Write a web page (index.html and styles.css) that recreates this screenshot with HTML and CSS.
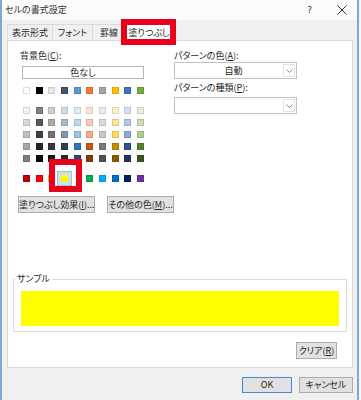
FILE: index.html
```html
<!DOCTYPE HTML>
<html>
    <head>
        <meta charset="utf-8">
        <title>セルの書式設定</title>
        <link rel="stylesheet" href="styles.css">
    </head>
    <body>
        <div class="window">
            <div class="titlebar">
                <span class="title">セルの書式設定</span>
                <span class="help">?</span>
                <svg class="close" width="10" height="10" viewBox="0 0 10 10"><path d="M0.5 0.5L9.5 9.5M9.5 0.5L0.5 9.5" stroke="#333" stroke-width="1"/></svg>
            </div>
            <div class="tabs">
                <div class="tab t1">表示形式</div>
                <div class="tab t2">フォント</div>
                <div class="tab t3">罫線</div>
                <div class="tab active">塗りつぶし<span class="mark mark-tab"></span></div>
            </div>
            <div class="panel">
                <div class="cols">
                    <div class="left">
                        <div class="label">背景色(<u>C</u>):</div>
                        <div class="btn none">色なし</div>
                        <div class="swatches" id="theme"></div>
                        <div class="swatches shades" id="shades"></div>
                        <div class="swatches" id="standard"></div>
                        <div class="actions">
                            <div class="btn effect">塗りつぶし効果(<u>I</u>)...</div>
                            <div class="btn more">その他の色(<u>M</u>)...</div>
                        </div>
                    </div>
                    <div class="right">
                        <div class="label">パターンの色(<u>A</u>):</div>
                        <div class="dropdown"><span class="value">自動</span><span class="arrow"><svg width="7" height="4" viewBox="0 0 7 4"><path d="M0.5 0.5L3.5 3.5L6.5 0.5" fill="none" stroke="#8a8a8a"/></svg></span></div>
                        <div class="label label2">パターンの種類(<u>P</u>):</div>
                        <div class="dropdown dd2"><span class="value"></span><span class="arrow"><svg width="7" height="4" viewBox="0 0 7 4"><path d="M0.5 0.5L3.5 3.5L6.5 0.5" fill="none" stroke="#8a8a8a"/></svg></span></div>
                    </div>
                </div>
                <fieldset class="sample">
                    <legend>サンプル</legend>
                    <div class="sample-fill"></div>
                </fieldset>
                <div class="clear-row"><div class="btn clear">クリア(<u>R</u>)</div></div>
            </div>
            <div class="footer">
                <div class="btn ok">OK</div>
                <div class="btn cancel">キャンセル</div>
            </div>
        </div>
        <script>
        const theme = ["#FFFFFF","#000000","#E7E6E6","#44546A","#5B9BD5","#ED7D31","#A5A5A5","#FFC000","#4472C4","#70AD47"];
        const shades = [
            ["#F2F2F2","#7F7F7F","#D0CECE","#D6DCE4","#DDEBF7","#FCE4D6","#EDEDED","#FFF2CC","#D9E1F2","#E2EFDA"],
            ["#D9D9D9","#595959","#AEAAAA","#ACB9CA","#BDD7EE","#F8CBAD","#DBDBDB","#FFE699","#B4C6E7","#C6E0B4"],
            ["#BFBFBF","#404040","#757171","#8497B0","#9BC2E6","#F4B084","#C9C9C9","#FFD966","#8EA9DB","#A9D08E"],
            ["#A6A6A6","#262626","#3A3838","#333F4F","#2F75B5","#C65911","#7B7B7B","#BF8F00","#305496","#548235"],
            ["#808080","#0D0D0D","#161616","#222B35","#1F4E78","#833C0C","#525252","#806000","#203764","#375623"]
        ];
        const standard = ["#C00000","#FF0000","#FFC000","#FFFF00","#92D050","#00B050","#00B0F0","#0070C0","#002060","#7030A0"];

        function addSwatch(box, color){
            const s = document.createElement("span");
            s.className = "swatch";
            s.style.background = color;
            box.appendChild(s);
            return s;
        }
        theme.forEach((c) => addSwatch(document.getElementById("theme"), c));
        shades.forEach((row) => {
            row.forEach((c) => addSwatch(document.getElementById("shades"), c));
        });
        standard.forEach((c, i) => {
            const s = addSwatch(document.getElementById("standard"), c);
            if(i === 3){
                // picked colour: red note box, then the swatch drawn again on top
                s.classList.add("selected");
                s.style.background = "none";
                const mark = document.createElement("span");
                mark.className = "mark mark-swatch";
                s.appendChild(mark);
                const fill = document.createElement("span");
                fill.className = "fill";
                fill.style.background = c;
                s.appendChild(fill);
            }
        });
        </script>
    </body>
</html>
```
FILE: styles.css
```css
*{
    box-sizing: border-box;
}
body{
    margin: 0;
    background: #f7f7f7;
    font-family: "Noto Sans CJK JP", "Noto Sans", sans-serif;
    font-size: 9px;
    color: #1e1e1e;
    font-feature-settings: "palt";
}
u{
    text-decoration: underline;
    text-underline-offset: 1px;
}
.window{
    width: 359px;
    height: 400px;
    background: #f0f0f0;
    border-left: 2px solid #7fa9d4;
    border-right: 2px solid #7fa9d4;
}
.titlebar{
    height: 20px;
    background: #fbfbfb;
    display: flex;
    align-items: center;
    padding: 0 10px 1px 3px;
}
.title{
    color: #333;
}
.help{
    margin-left: auto;
    margin-right: 25px;
    font-family: "DejaVu Sans", sans-serif;
    font-size: 9px;
    color: #333;
}
.tabs{
    height: 20px;
    display: flex;
    align-items: flex-end;
    padding-left: 5px;
    position: relative;
    z-index: 2;
}
.tab{
    height: 16px;
    line-height: 15px;
    text-align: center;
    border: 1px solid #dadada;
    border-bottom: none;
    background: #f0f0f0;
    margin-right: -1px;
}
.t1{ width: 46px; }
.t2{ width: 41px; }
.t3{ width: 34px; }
.tab.active{
    width: 48px;
    height: 19px;
    line-height: 19px;
    background: #fff;
    margin-bottom: -1px;
    position: relative;
}
.mark{
    position: absolute;
    border: 6px solid #e8001c;
}
.mark-tab{
    left: -5px;
    top: -4px;
    right: -4px;
    bottom: -4px;
}
.panel{
    margin-left: 5px;
    width: 346px;
    height: 328px;
    background: #fff;
    border: 1px solid #d9d9d9;
    padding-top: 8px;
}
.cols{
    display: flex;
}
.left{
    width: 166px;
    padding-left: 12px;
}
.right{
    width: 123px;
}
.label{
    height: 13px;
    line-height: 13px;
}
.btn{
    background: #e1e1e1;
    border: 1px solid #adadad;
    text-align: center;
    white-space: nowrap;
}
.none{
    margin: 4px 0 0 2px;
    width: 122px;
    height: 13px;
    line-height: 11px;
    background: #fff;
    border-color: #b4b4b4;
}
.swatches{
    display: grid;
    grid-template-columns: repeat(10, 7px);
    column-gap: 5.67px;
    row-gap: 5px;
    margin-left: 3px;
}
#theme{
    margin-top: 8px;
}
#shades{
    margin-top: 13px;
}
#standard{
    margin-top: 13px;
}
.swatch{
    display: block;
    width: 7px;
    height: 7px;
    box-shadow: inset 0 0 0 1px rgba(0,0,0,0.12);
    position: relative;
}
.swatch.selected{
    z-index: 3;
    box-shadow: none;
}
.mark-swatch{
    left: -12px;
    top: -16px;
    width: 33px;
    height: 33px;
    background: #fff;
}
.fill{
    position: absolute;
    inset: 0;
    box-shadow: 0 0 0 3px #cfe0ef, 0 0 0 4px #a9bfd4;
}
.actions{
    display: flex;
    gap: 12px;
    margin: 14px 0 0 -2px;
}
.actions .btn{
    height: 17px;
    line-height: 15px;
}
.effect{ width: 77px; }
.more{ width: 71px; }
.dropdown{
    height: 17px;
    border: 1px solid #c3c3c3;
    display: flex;
    background: #fff;
}
.dropdown .value{
    flex: 1;
    text-align: center;
    line-height: 15px;
    padding-left: 10px;
}
.arrow{
    width: 12px;
    margin: 1px;
    border: 1px solid #e3e3e3;
    display: flex;
    align-items: center;
    justify-content: center;
}
.label2{
    margin-top: 2px;
}
.dd2{
    margin-top: 3px;
}
.sample{
    margin: 60px 0 0 5px;
    width: 334px;
    padding: 0 7px 5px;
    border: 1px solid #dcdcdc;
}
.sample legend{
    margin-left: -6px;
    padding: 0 2px;
    line-height: 12px;
}
.sample-fill{
    margin-top: 6px;
    height: 35px;
    background: #ffff00;
}
.clear-row{
    display: flex;
    justify-content: flex-end;
    margin: 10px 15px 0 0;
}
.clear{
    width: 41px;
    height: 17px;
    line-height: 15px;
}
.footer{
    display: flex;
    justify-content: flex-end;
    gap: 7px;
    padding: 9px 4px 0 0;
}
.footer .btn{
    height: 16px;
    line-height: 14px;
}
.ok{
    width: 50px;
    border-color: #3b8bd8;
}
.cancel{
    width: 54px;
}
```
